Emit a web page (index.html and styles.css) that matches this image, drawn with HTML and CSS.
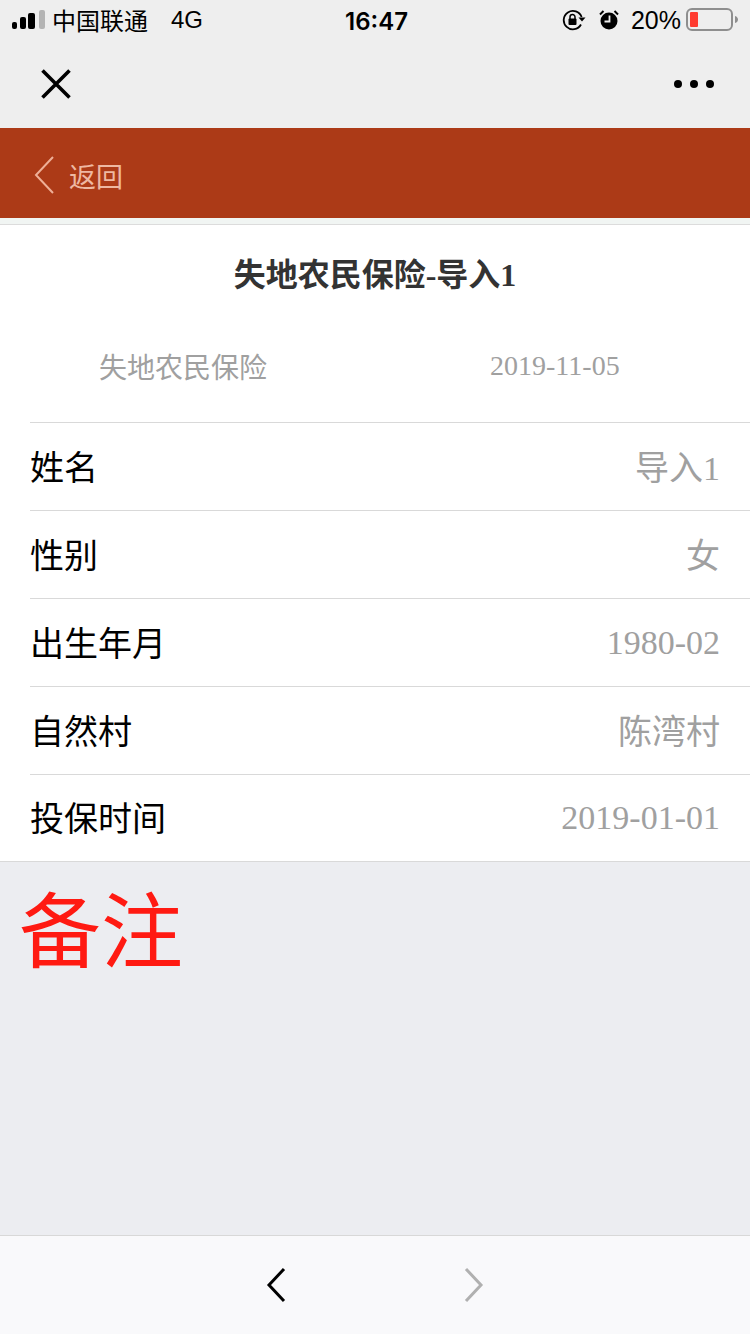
FILE: index.html
```html
<!DOCTYPE html>
<html>
<head>
  <meta charset="UTF-8">
  <title>失地农民保险</title>
  <link rel="stylesheet" href="styles.css">
</head>
<body>
  <div class="page">
    <!-- 手机状态栏 -->
    <div class="status-bar">
      <div class="status-left">
        <svg class="signal" width="34" height="20" viewBox="0 0 34 20">
          <rect x="0" y="12" width="5" height="7" rx="2" fill="#000"/>
          <rect x="8" y="7" width="6" height="12" rx="2" fill="#000"/>
          <rect x="16" y="3" width="7" height="16" rx="2" fill="#000"/>
          <rect x="27" y="0" width="6" height="19" rx="2" fill="#b4b4b4"/>
        </svg>
        <span class="carrier">中国联通</span>
        <span class="network">4G</span>
      </div>
      <div class="clock">16:47</div>
      <div class="status-right">
        <svg class="lock-icon" width="24" height="22" viewBox="0 0 24 22">
          <path d="M19 15.5A9.2 9.2 0 1 1 19.6 8" fill="none" stroke="#000" stroke-width="1.8"/>
          <path d="M16.5 8.5h7l-3.5 4z" fill="#000"/>
          <rect x="6.5" y="9.5" width="8" height="6.5" rx="1" fill="#000"/>
          <path d="M8 10V8a2.5 2.5 0 0 1 5 0v2" fill="none" stroke="#000" stroke-width="1.5"/>
        </svg>
        <svg class="alarm-icon" width="20" height="20" viewBox="0 0 20 20">
          <circle cx="10" cy="11" r="8.5" fill="#000"/>
          <path d="M1 4.5L4.5 1M19 4.5L15.5 1" stroke="#000" stroke-width="2" fill="none"/>
          <path d="M10.5 5.5v6h-5" stroke="#eee" stroke-width="1.8" fill="none"/>
        </svg>
        <span class="battery-text">20%</span>
        <svg class="battery" width="52" height="24" viewBox="0 0 52 24">
          <rect x="1" y="1" width="45" height="21" rx="5" fill="none" stroke="#8e8e8e" stroke-width="2"/>
          <rect x="4" y="4" width="8" height="15" rx="1" fill="#ff3b30"/>
          <path d="M49 8c2 .5 3 2 3 3.500s-1 3-3 3.500z" fill="#8e8e8e"/>
        </svg>
      </div>
    </div>

    <!-- 微信导航 -->
    <div class="nav-bar">
      <svg width="30" height="30" viewBox="0 0 30 30">
        <path d="M1.500 1.500L28.500 28.500M28.500 1.500L1.500 28.500" stroke="#000" stroke-width="3.600" fill="none"/>
      </svg>
      <div class="more-dots">
        <span class="dot"></span>
        <span class="dot"></span>
        <span class="dot"></span>
      </div>
    </div>

    <div class="app-header">
      <svg class="back-icon" width="20" height="38" viewBox="0 0 20 38">
        <path d="M19 1L2 19L19 37" stroke="#eeaf97" stroke-width="2" fill="none"/>
      </svg>
      <span class="back-text">返回</span>
    </div>
    <div class="header-gap"></div>

    <div class="content">
      <div class="article-title">失地农民保险-导入1</div>
      <div class="article-meta">
        <span class="meta-type">失地农民保险</span>
        <span class="meta-date">2019-11-05</span>
      </div>
      <div class="info-list">
        <div class="info-row"><span class="info-label">姓名</span><span class="info-value">导入1</span></div>
        <div class="info-row"><span class="info-label">性别</span><span class="info-value">女</span></div>
        <div class="info-row"><span class="info-label">出生年月</span><span class="info-value info-num">1980-02</span></div>
        <div class="info-row"><span class="info-label">自然村</span><span class="info-value">陈湾村</span></div>
        <div class="info-row"><span class="info-label">投保时间</span><span class="info-value info-num">2019-01-01</span></div>
      </div>
    </div>

    <div class="notes">备注</div>

    <div class="bottom-bar">
      <svg width="20" height="36" viewBox="0 0 20 36">
        <path d="M18 2L3 18L18 34" stroke="#000" stroke-width="3" fill="none"/>
      </svg>
      <svg width="20" height="36" viewBox="0 0 20 36">
        <path d="M2 2L17 18L2 34" stroke="#b0b0b0" stroke-width="3" fill="none"/>
      </svg>
    </div>
  </div>
</body>
</html>
```

FILE: styles.css
```css
body {
  margin: 0;
  padding: 0;
  background-color: #ecedf1;
  font-family: "Liberation Serif", "Noto Sans CJK SC", serif;
}

.page {
  display: flex;
  flex-direction: column;
  height: 1334px;
  overflow: hidden;
}

.status-bar {
  height: 40px;
  padding: 0 12px;
  display: flex;
  align-items: center;
  justify-content: space-between;
  background-color: #eeeeee;
  color: #000;
  font-family: "Liberation Sans", "Noto Sans CJK SC", sans-serif;
  font-size: 24px;
  position: relative;
}

.status-left {
  display: flex;
  align-items: center;
}

.carrier {
  margin-left: 6px;
  margin-bottom: 2px;
}

.network {
  margin-left: 23px;
}

.clock {
  font-family: "Inter", sans-serif;
  font-size: 24px;
  font-weight: 600;
  position: absolute;
  left: 345px;
  top: 7px;
}

.status-right {
  display: flex;
  align-items: center;
}

.alarm-icon {
  margin-left: 13px;
}

.battery-text {
  font-size: 25px;
  margin-left: 12px;
}

.battery {
  margin-left: 5px;
}

.nav-bar {
  height: 88px;
  padding: 0 36px 0 41px;
  display: flex;
  align-items: center;
  justify-content: space-between;
  background-color: #eeeeee;
}

.more-dots {
  display: flex;
  gap: 8px;
}

.dot {
  width: 8px;
  height: 8px;
  border-radius: 50%;
  background-color: #000;
}

.app-header {
  height: 90px;
  padding-left: 34px;
  display: flex;
  align-items: center;
  background-color: #ac3a17;
}

.back-icon {
  margin-top: 3px;
}

.back-text {
  margin-left: 15px;
  margin-top: 4px;
  font-family: "Noto Sans CJK SC", sans-serif;
  font-size: 27px;
  color: #eeb8a2;
}

.header-gap {
  height: 6px;
  background-color: #f1f5f3;
  border-bottom: 1px solid #dcdcdc;
}

.content {
  background-color: #fff;
  border-bottom: 1px solid #d9d9d9;
}

.article-title {
  height: 100px;
  line-height: 100px;
  text-align: center;
  font-size: 32px;
  font-weight: bold;
  color: #333;
}

.article-meta {
  height: 81px;
  padding: 0 0 16px 99px;
  display: flex;
  align-items: center;
  font-size: 28px;
  color: #a0a0a0;
}

.meta-date {
  margin-left: 223px;
}

.info-list {
  margin-left: 30px;
}

.info-row {
  height: 84px;
  padding: 0 30px 3px 0;
  display: flex;
  align-items: center;
  justify-content: space-between;
  border-top: 1px solid #d9d9d9;
  font-size: 34px;
}

.info-row:last-child {
  height: 83px;
}

.info-label {
  color: #000;
}

.info-value {
  color: #a0a0a0;
}

.info-num {
  margin-top: 3px;
}

.notes {
  flex: 1;
  padding: 16px 0 0 19px;
  font-family: "Noto Sans CJK SC", sans-serif;
  font-size: 82px;
  line-height: 96px;
  color: #ff1a12;
}

.bottom-bar {
  height: 98px;
  display: flex;
  align-items: center;
  justify-content: center;
  gap: 178px;
  background-color: #f9f9fb;
  border-top: 1px solid #d8d8d8;
}
```
